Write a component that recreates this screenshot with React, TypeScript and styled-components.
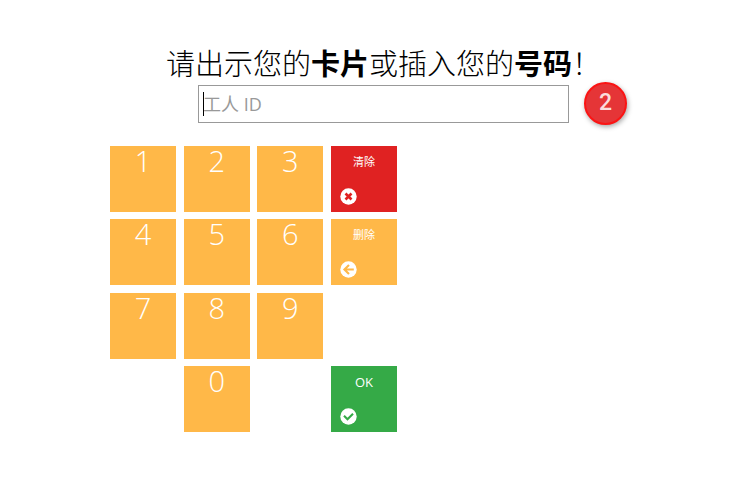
import React, { useState } from "react";
import styled, { createGlobalStyle } from "styled-components";

const GlobalStyle = createGlobalStyle`
  *, *::before, *::after { box-sizing: border-box; }
  body {
    margin: 0;
    background: #fff;
    color: #000;
    font-family: "Open Sans", "Noto Sans CJK SC", sans-serif;
  }
`;

const colors = { yellow: "#ffb848", red: "#e02222", green: "#35aa47" };
type Tone = keyof typeof colors;

const Page = styled.main`
  padding: 43px 0 56px 36px;
`;

const Header = styled.header`
  display: flex;
  flex-direction: column;
  align-items: center;
  gap: 1px;
`;

const Title = styled.h1`
  margin: 0;
  font-size: 29px;
  line-height: 41px;
  font-weight: 300;
  white-space: nowrap;

  b { font-weight: 700; }
`;

const Field = styled.div`
  position: relative;
  width: 371px;
`;

const WorkerInput = styled.input`
  display: block;
  width: 100%;
  height: 38px;
  padding: 0 4px;
  border: 1px solid #999;
  border-radius: 0;
  outline: none;
  background: #fff;
  color: #000;
  caret-color: transparent;
  font: inherit;
  font-size: 18px;
  font-weight: 400;

  &::placeholder { color: #999; opacity: 1; }
`;

const Caret = styled.span`
  position: absolute;
  left: 5px;
  top: 7px;
  width: 1px;
  height: 24px;
  background: #000;
`;

const StepBadge = styled.span`
  position: absolute;
  left: calc(100% + 15px);
  top: -3px;
  width: 43px;
  height: 43px;
  display: flex;
  align-items: center;
  justify-content: center;
  padding-bottom: 2px;
  border: 2px solid #fb1414;
  border-radius: 50%;
  background: #e53537;
  box-shadow: 1px 2px 5px rgba(0, 0, 0, 0.35);
  color: #fbdcdc;
  font-family: Roboto, sans-serif;
  font-size: 23px;
  line-height: 24px;
  font-weight: 500;
`;

const Keypad = styled.div`
  display: grid;
  grid-template-columns: repeat(4, 66px);
  grid-template-rows: repeat(4, 66px);
  place-content: space-between;
  width: 287px;
  height: 286px;
  margin: 23px 0 0 74px;
`;

const Key = styled.button<{ $tone: Tone; $column: number }>`
  grid-column: ${(p) => p.$column};
  display: flex;
  flex-direction: column;
  align-items: center;
  padding: 0;
  border: 0;
  background: ${(p) => colors[p.$tone]};
  color: #fff;
  font: inherit;
  font-weight: 300;
  cursor: pointer;
`;

const DigitKey = styled(Key)`
  font-size: 29px;
  line-height: 30px;
`;

const ActionKey = styled(Key)<{ $latin?: boolean }>`
  justify-content: space-between;
  padding: 5px 9px 7px;
  font-size: ${(p) => (p.$latin ? 13 : 11)}px;
  line-height: 22px;
  font-weight: 400;

  svg {
    display: block;
    align-self: flex-start;
    width: 17px;
    height: 17px;
  }
`;

const marks = {
  clear: "M5.5 5.5l6 6M11.5 5.5l-6 6",
  back: "M13.8 8.5H5M9 3.9L4.4 8.5 9 13.1",
  ok: "M4 7.8l3.5 3.5 5.5-5.5",
};

function CircleIcon({ mark, tone }: { mark: keyof typeof marks; tone: Tone }) {
  return (
    <svg viewBox="0 0 17 17" aria-hidden="true">
      <circle cx="8.5" cy="8.5" r="8.2" fill="#fff" />
      <path
        d={marks[mark]}
        fill="none"
        stroke={colors[tone]}
        strokeWidth={mark === "clear" ? 2.6 : 2.1}
      />
    </svg>
  );
}

export default function App() {
  const [value, setValue] = useState("");

  const digit = (n: number, column: number) => (
    <DigitKey type="button" $tone="yellow" $column={column} onClick={() => setValue((v) => v + n)}>
      {n}
    </DigitKey>
  );

  return (
    <>
      <GlobalStyle />
      <Page lang="zh-CN">
        <Header>
          <Title>
            请出示您的<b>卡片</b>或插入您的<b>号码</b>！
          </Title>
          <Field>
            <WorkerInput
              type="text"
              aria-label="工人 ID"
              placeholder="工人 ID"
              value={value}
              onChange={(e) => setValue(e.target.value)}
            />
            {value === "" && <Caret />}
            <StepBadge>2</StepBadge>
          </Field>
        </Header>
        <Keypad>
          {digit(1, 1)}
          {digit(2, 2)}
          {digit(3, 3)}
          <ActionKey type="button" $tone="red" $column={4} onClick={() => setValue("")}>
            清除
            <CircleIcon mark="clear" tone="red" />
          </ActionKey>
          {digit(4, 1)}
          {digit(5, 2)}
          {digit(6, 3)}
          <ActionKey
            type="button"
            $tone="yellow"
            $column={4}
            onClick={() => setValue((v) => v.slice(0, -1))}
          >
            删除
            <CircleIcon mark="back" tone="yellow" />
          </ActionKey>
          {digit(7, 1)}
          {digit(8, 2)}
          {digit(9, 3)}
          {digit(0, 2)}
          <ActionKey type="button" $tone="green" $column={4} $latin>
            OK
            <CircleIcon mark="ok" tone="green" />
          </ActionKey>
        </Keypad>
      </Page>
    </>
  );
}
